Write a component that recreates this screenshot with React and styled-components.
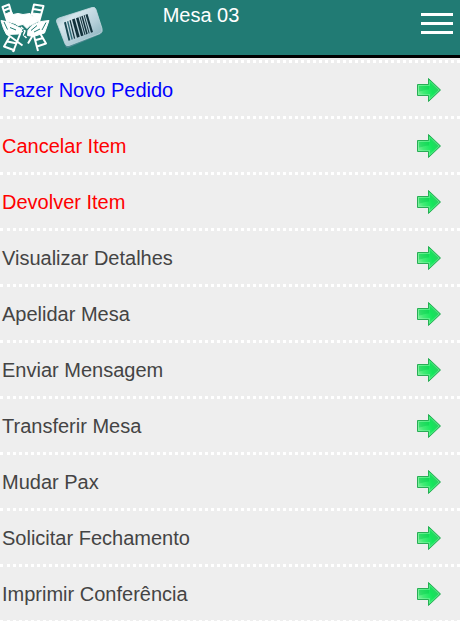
import React from "react";
import styled, { createGlobalStyle } from "styled-components";

const actions = [
  { label: "Fazer Novo Pedido", color: "#0000ff" },
  { label: "Cancelar Item", color: "#ff0000" },
  { label: "Devolver Item", color: "#ff0000" },
  { label: "Visualizar Detalhes" },
  { label: "Apelidar Mesa" },
  { label: "Enviar Mensagem" },
  { label: "Transferir Mesa" },
  { label: "Mudar Pax" },
  { label: "Solicitar Fechamento" },
  { label: "Imprimir Conferência" },
];

function TableIcon() {
  return (
    <svg width="52" height="54" viewBox="0 0 52 54" fill="none" stroke="#fff" strokeLinejoin="round">
      {/* back chairs */}
      <path d="M7.500 22 2.500 7 9 4.500 12 15M4 10.500l6-2.500" strokeWidth="2" />
      <path d="M5.500 14l6-2.500 2 5-6 5z" fill="#fff" strokeWidth="1" />
      <path d="M31.500 15 34 4.500l9.500 1.500L39 22M33.500 9l8.500 1.500" strokeWidth="2" />
      <path d="M32 13l9 1-2 7-5-2z" fill="#fff" strokeWidth="1" />
      {/* table cloth */}
      <path
        d="M13 14.500l5-1 5 1 7-1 4 4 4 4-8 4-3 3-4-4-5 1-3-2-7-2z"
        fill="#fff"
        strokeWidth="1"
      />
      {/* front left chair */}
      <path d="M1 20.500l5 1 9 4 6 3 1.500 3-4 2.500-12 .5-3-6z" fill="#fff" strokeWidth="1" />
      <path d="M7 34l15.500 11.500M10 36 4 46.500l11 4M20.500 33 13 52M7.500 41.500l9.500 2" strokeWidth="2" />
      <path d="M4 22l3.500 7.500M10 27.500l6 2.500" stroke="#217b74" strokeWidth="1" />
      {/* front right chair */}
      <path d="M49 20.500l-8 1-9 4-4 5-.5 5 6 1 11-3.500z" fill="#fff" strokeWidth="1" />
      <path d="M33 35l-5 8.500M33.500 34l4.500 17M40.500 34l5.500 9.500-9 3M36 40l7-2" strokeWidth="2" />
      <path d="M46 22.500l-4 7.500M37 25.500l-6 5M34 32l6-3" stroke="#217b74" strokeWidth="1" />
      {/* table foot */}
      <path d="M21 27l4 4-1.500 4 3 3" strokeWidth="1.500" />
      <path d="M22 30.500l4-2M24 36l2-3" stroke="#217b74" strokeWidth="1" />
    </svg>
  );
}

function BarcodeIcon() {
  return (
    <svg width="52" height="54" viewBox="0 0 52 54">
      <defs>
        <linearGradient id="tag" x1="0" y1="0" x2="1" y2="1">
          <stop offset="0" stopColor="#87b3bf" />
          <stop offset="0.3" stopColor="#d5e6ec" />
          <stop offset="0.6" stopColor="#b6d0da" />
          <stop offset="1" stopColor="#79a7b3" />
        </linearGradient>
      </defs>
      <path
        d="M2.500 22.500Q2 19.500 5 18.500L38 7.500q3-1 4 2l6 20q1 3.500-2 5L15 47.500q-3 1-4-2z"
        fill="#4f8b94"
      />
      <path
        d="M2.500 21.500Q2 19 5 18L38 7.500q3-1 4 2l6 19q1 3.500-2 5L15 45.500q-3 1-4-2z"
        fill="url(#tag)"
        stroke="#c1d9df"
        strokeOpacity="0.8"
      />
      <g transform="translate(10 22.500) skewY(-20)" fill="#12313b">
        <path d="M0 0h1.800l4.500 20H4.500z" fill="#174751" />
        <path d="M3 0h1.300l4.500 20H7.500z" fill="#2e6975" />
        <path d="M5.500 0h1.200l4.500 20H10z" />
        <path d="M8 0h2.700l5 20H13z" />
        <path d="M12 0h2.500l5 20H17z" />
        <path d="M15.500 0h1l5 20h-1z" />
        <path d="M17.300 0h1.400l5 20h-1.400z" />
        <path d="M19.700 0h.9l5 20h-.9z" />
        <path d="M21.500 0h2l5.500 20h-2z" />
      </g>
    </svg>
  );
}

function ArrowIcon() {
  return (
    <svg width="26" height="26" viewBox="0 0 26 26">
      <defs>
        <linearGradient id="arrow" x1="0" y1="0.7" x2="1" y2="0.3">
          <stop offset="0" stopColor="#80ef9b" />
          <stop offset="0.25" stopColor="#42ec75" />
          <stop offset="0.6" stopColor="#12e65b" />
          <stop offset="1" stopColor="#38c766" />
        </linearGradient>
      </defs>
      <path d="M1.500 7.500h11v-6L24.500 13l-12 11.500v-6h-11z" fill="url(#arrow)" stroke="#28ad55" />
      <path d="M2.500 17.500v-9h11V4l9.500 9-9.500 9v-4.500z" fill="none" stroke="#8df5ac" strokeOpacity="0.45" />
      <path d="M3 9h10v3.500c-4 0-6 1.500-10 2z" fill="#05c94b" fillOpacity="0.4" />
    </svg>
  );
}

function App() {
  return (
    <Page>
      <GlobalStyle />
      <Header>
        <Icons>
          <TableIcon />
          <BarcodeIcon />
        </Icons>
        <Title>Mesa 03</Title>
        <MenuButton aria-label="Menu">
          <span />
          <span />
          <span />
        </MenuButton>
      </Header>
      <Menu>
        {actions.map((action) => (
          <MenuItem key={action.label} $color={action.color}>
            <Label>{action.label}</Label>
            <ArrowIcon />
          </MenuItem>
        ))}
      </Menu>
    </Page>
  );
}

const GlobalStyle = createGlobalStyle`
  body {
    margin: 0;
    overflow: hidden;
    background: #eee;
    font-family: "Liberation Sans", Arial, sans-serif;
  }
`;

const Page = styled.div`
  height: 621px;
  overflow: hidden;
  font-size: 20px;
`;

const Header = styled.header`
  display: grid;
  grid-template-columns: 1fr auto 1fr;
  align-items: start;
  box-sizing: border-box;
  height: 58px;
  border-bottom: 3px solid #000;
  background: #217b74;
`;

const Icons = styled.div`
  display: flex;
  gap: 2px;
  min-width: 0;
`;

const Title = styled.h1`
  margin: 4px 0 0;
  padding-right: 58px;
  color: #fff;
  font-size: 20px;
  font-weight: normal;
  line-height: 23px;
`;

const MenuButton = styled.button`
  display: flex;
  flex-direction: column;
  justify-self: end;
  gap: 6px;
  width: 32px;
  margin: 13px 7px 0 0;
  padding: 0;
  border: 0;
  background: none;

  span {
    width: 100%;
    height: 3px;
    background: #fff;
  }
`;

const Menu = styled.ul`
  margin: 2px 0 0;
  padding: 0;
  border-top: 3px dotted #fff;
  list-style: none;
`;

const MenuItem = styled.li`
  display: flex;
  align-items: center;
  justify-content: space-between;
  height: 53px;
  padding: 0 18px 0 2px;
  border-bottom: 3px dotted #fff;
  color: ${(props) => props.$color || "#444"};
`;

const Label = styled.span`
  padding-top: 2px;
  line-height: 23px;
`;

export default App;
